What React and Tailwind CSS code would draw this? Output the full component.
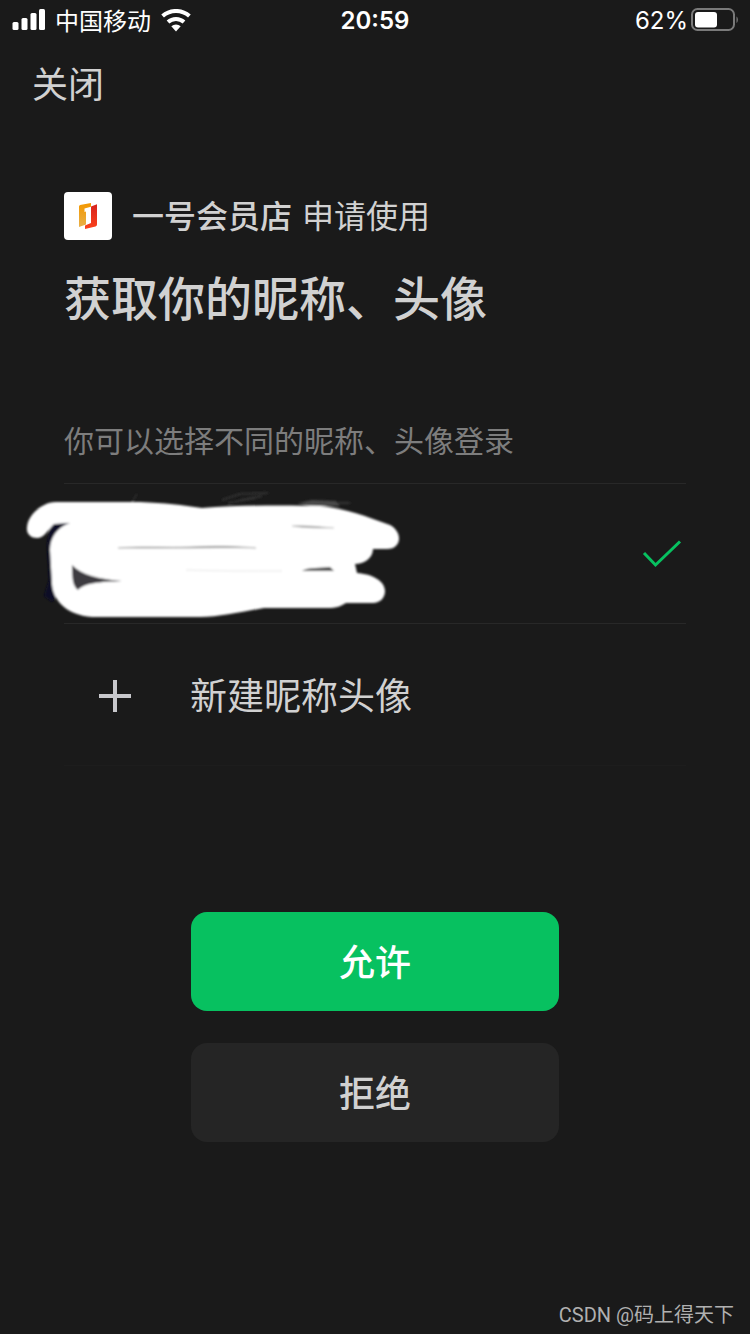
import React from 'react';

function SignalIcon() {
  return (
    <svg width="33" height="22" viewBox="0 0 33 22" fill="#fff" aria-hidden="true">
      <rect x="0.5" y="13" width="6" height="8" rx="1.5" />
      <rect x="9.5" y="9" width="6" height="12" rx="1.5" />
      <rect x="18.5" y="4" width="6" height="17" rx="1.5" />
      <rect x="27" y="0" width="6" height="21" rx="1.5" />
    </svg>
  );
}

function WifiIcon() {
  return (
    <svg width="30" height="23" viewBox="0 0 30 23" fill="none" stroke="#fff" strokeWidth="4" aria-hidden="true">
      <path d="M1.6 7.1A20 20 0 0 1 28.4 7.1" />
      <path d="M7 13.1A12 12 0 0 1 23 13.1" />
      <path d="M15 22.5L10.3 17.2A7 7 0 0 1 19.7 17.2Z" fill="#fff" stroke="none" />
    </svg>
  );
}

function BatteryIcon() {
  return (
    <svg width="48" height="24" viewBox="0 0 48 24" fill="none" aria-hidden="true">
      <rect x="2" y="1" width="42" height="21" rx="5.5" stroke="#7a7a7a" strokeWidth="2" />
      <rect x="5" y="4" width="22" height="15.5" rx="3" fill="#fff" />
      <path d="M46.5 8.5C48.3 9.5 48.3 14 46.5 15Z" fill="#7a7a7a" />
    </svg>
  );
}

function StoreLogo() {
  return (
    <svg className="h-12 w-12 rounded bg-white" viewBox="0 0 48 48" aria-hidden="true">
      <defs>
        <linearGradient id="gold" x1="0" y1="0" x2="0" y2="1">
          <stop offset="0" stopColor="#f39800" />
          <stop offset="1" stopColor="#e8b04a" />
        </linearGradient>
        <linearGradient id="red" x1="0" y1="0" x2="0" y2="1">
          <stop offset="0" stopColor="#d7231d" />
          <stop offset="1" stopColor="#fb421c" />
        </linearGradient>
      </defs>
      <path d="M15 14.5Q15 13.5 16 13L27 11V14.8L20.5 16.5V20L22 19.6V32.5L15 35Z" fill="url(#gold)" />
      <path d="M33 12.3L27 14.5V31L21 33.5V37L31.5 34.5Q33 34 33 32.5Z" fill="url(#red)" />
    </svg>
  );
}

function Scribble() {
  return (
    <svg className="-ml-11 shrink-0" width="390" height="131" viewBox="20 488 390 131" aria-hidden="true">
      <defs>
        <filter id="soft">
          <feGaussianBlur stdDeviation="0.8" />
        </filter>
      </defs>
      <g filter="url(#soft)">
        <path d="M50 524L70 520L62 590L52 602L44 596L49 580L47 545Z" fill="#0b0d26" />
        <path d="M222 500L240 494L268 493M228 503L256 498M240 500L262 496" fill="none" stroke="#303030" strokeWidth="2" />
        <path d="M298 503L312 500L336 501L340 506L310 506Z" fill="#484848" />
        <path d="M338 503L350 503" stroke="#303030" strokeWidth="2" />
        <path d="M132 502L137 494" stroke="#3a3a3a" />
        <path
          d="M27 527C28 515 42 502 56 502L140 502C165 503 182 505 202 508C240 505 290 505 320 506C348 509 365 516 390 525C403 532 402 549 387 549L373 549C373 558 364 564 355 564L357 573C372 574 385 581 385 591C385 598 380 603 373 603L346 603C341 606 337 608 327 608L264 608C240 612 220 617 200 617L92 617C66 615 53 600 52 584L50 550C50 538 57 527 70 523L54 524C48 530 44 538 37 538C31 538 26 534 27 527Z"
          fill="#fff"
        />
        <path d="M72 565C82 575 98 579 122 581C100 582 84 583 78 590C73 586 72 580 72 565Z" fill="#3c3a40" />
        <path d="M118 548C145 546 165 548 190 547C215 546 235 546 256 548C230 547 200 548 175 548Z" fill="#666" stroke="#999" strokeWidth="0.5" />
        <path d="M292 526C305 525 320 527 334 528C318 528 305 528 292 526Z" fill="#888" stroke="#bbb" strokeWidth="0.5" />
        <path d="M186 570C220 571 250 571 282 571" fill="none" stroke="#e8e8e8" />
        <path d="M302 571C308 567 322 568 330 567L334 571Z" fill="#444" />
      </g>
    </svg>
  );
}

function StatusBar() {
  return (
    <div className="flex h-10 items-center justify-between px-3 text-2xl text-white">
      <div className="flex flex-1 items-center gap-2.5">
        <SignalIcon />
        <span>中国移动</span>
        <WifiIcon />
      </div>
      <time className="pt-0.5 font-[Inter] font-semibold">20:59</time>
      <div className="flex flex-1 items-center justify-end gap-0.5">
        <span className="pt-0.5 font-[Inter]">62%</span>
        <BatteryIcon />
      </div>
    </div>
  );
}

export default function App() {
  return (
    <div className="flex min-h-screen flex-col bg-[#1a1a1a] font-['Noto_Sans_CJK_SC',sans-serif] text-[#d1d1d1]">
      <StatusBar />
      <nav className="flex h-[84px] items-center px-8">
        <button type="button" className="text-4xl">关闭</button>
      </nav>

      <main className="flex flex-col px-16 pt-[68px]">
        <div className="flex items-center gap-5">
          <StoreLogo />
          <p className="flex gap-2.5 pb-1 text-[32px] leading-[44px]">
            <span className="font-medium">一号会员店</span>
            <span>申请使用</span>
          </p>
        </div>
        <h1 className="mt-6 text-[47px] leading-[64px] font-medium">获取你的昵称、头像</h1>

        <p className="mt-[91px] text-[30px] leading-10 text-[#7d7d7d]">你可以选择不同的昵称、头像登录</p>
        <ul className="mt-6">
          <li className="flex h-[140px] items-center justify-between border-t border-[#282828]">
            <Scribble />
            <svg className="mr-1" width="40" height="28" viewBox="0 0 40 28" fill="none" stroke="#07c160" strokeWidth="3" aria-hidden="true">
              <path d="M2 13L13.5 25L38 1.5" />
            </svg>
          </li>
          <li className="border-t border-b border-t-[#282828] border-b-[#1d1d1d]">
            <button type="button" className="flex h-[141px] w-full items-center gap-[58px] pl-[34px] text-[37px]">
              <svg width="34" height="36" viewBox="0 0 34 36" stroke="#c8c8cc" strokeWidth="4" aria-hidden="true">
                <path d="M17 3V35M1 19H33" />
              </svg>
              新建昵称头像
            </button>
          </li>
        </ul>

        <div className="mx-auto mt-[146px] flex w-[368px] max-w-full flex-col gap-8 text-4xl font-medium">
          <button type="button" className="h-[99px] rounded-2xl bg-[#07c160] pb-1 text-white">允许</button>
          <button type="button" className="h-[99px] rounded-2xl bg-[#252525] pb-1">拒绝</button>
        </div>
      </main>

      <footer className="mt-auto px-4 pb-[5px] text-right font-[Roboto,'Noto_Sans_CJK_SC',sans-serif] text-xl text-[#b0b0b0]">
        CSDN @码上得天下
      </footer>
    </div>
  );
}
